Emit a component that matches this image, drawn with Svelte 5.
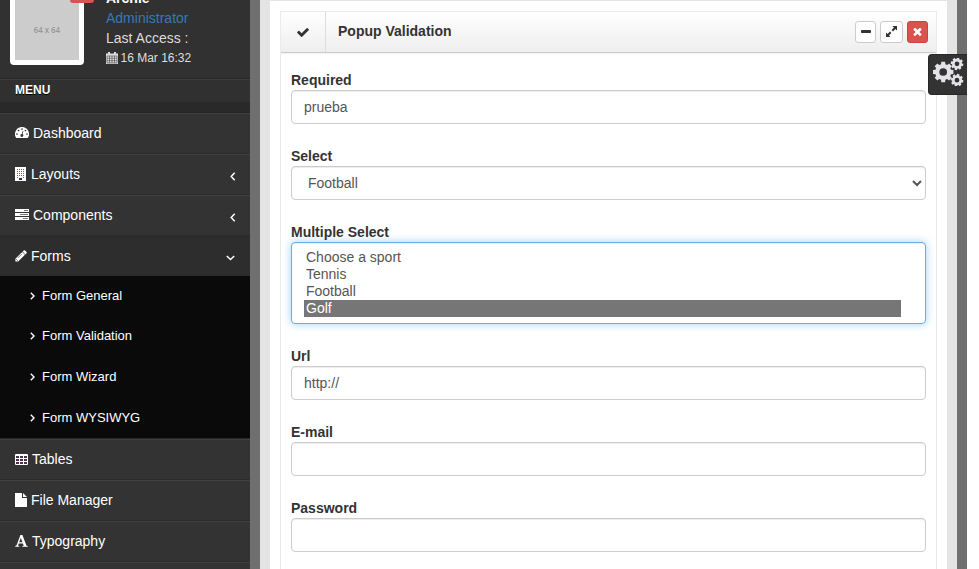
<script>
  const subItems = ['Form General', 'Form Validation', 'Form Wizard', 'Form WYSIWYG'];
  const sports = ['Choose a sport', 'Tennis', 'Football', 'Golf'];

  // Outline of a cog with eight teeth and a round hole.
  function gear(cx, cy, r, turn = 0) {
    const points = [];
    for (let i = 0; i < 8; i++) {
      const a = turn + (i * Math.PI) / 4;
      for (const [offset, k] of [[-0.27, 0.78], [-0.19, 1], [0.19, 1], [0.27, 0.78]]) {
        points.push(`${(cx + Math.cos(a + offset) * r * k).toFixed(2)} ${(cy + Math.sin(a + offset) * r * k).toFixed(2)}`);
      }
    }
    const h = r * 0.37;
    return `M${points.join('L')}Z M${cx - h} ${cy}a${h} ${h} 0 1 0 ${2 * h} 0a${h} ${h} 0 1 0 ${-2 * h} 0Z`;
  }
  const cogs = [gear(10.2, 14, 10.4), gear(24, 5.8, 6.4, 0.2), gear(24, 22.2, 6.4, 0.2)].join(' ');
</script>

{#snippet icon(name)}
  {#if name === 'dashboard'}
    <svg width="14" height="12" viewBox="0 0 14 12"><path fill="#fff" d="M7 0a7 7 0 0 0-5.9 10.8q.2.3.6.3h10.6q.4 0 .6-.3A7 7 0 0 0 7 0z"/><g fill="#333"><circle cx="7" cy="2" r=".85"/><circle cx="3.5" cy="3.5" r=".85"/><circle cx="10.5" cy="3.5" r=".85"/><circle cx="2" cy="7" r=".85"/><circle cx="12" cy="7" r=".85"/><path d="M7.7 3.8l.7.2-.8 3.1a1.45 1.45 0 1 1-.8-.2z"/></g></svg>
  {:else if name === 'building'}
    <svg width="12" height="14" viewBox="0 0 12 14"><path fill="#fff" d="M0 0h11v14H0z"/><g fill="#75597f">{#each [2, 4, 6, 8] as y}{#each [2, 4, 6, 8] as x}<path d="M{x} {y}h1v1h-1z"/>{/each}{/each}<path d="M2 10h1v1H2zM8 10h1v1H8z"/><path fill="#333" d="M4 11h3v2H4z"/></g></svg>
  {:else if name === 'tasks'}
    <svg width="14" height="12" viewBox="0 0 14 12"><path fill="#fff" d="M0 0h14v3H0zM0 4h14v3H0zM0 8h14v3H0z"/><path stroke="#555" stroke-width=".8" d="M9 1.5h4M5 5.5h8M8 9.5h5"/></svg>
  {:else if name === 'pencil'}
    <svg width="12" height="12" viewBox="0 0 12 12"><path fill="#fff" d="M8.7.5q.7-.7 1.4 0l1.4 1.4q.7.7 0 1.4l-1.1 1.1-2.8-2.8zM7.2 2l2.8 2.8L3.2 11.6H.4V8.8z"/><path stroke="#333" stroke-width=".6" fill="none" d="M1.2 9.2l1.6 1.6M3 7.8l3.7-3.7"/></svg>
  {:else if name === 'table'}
    <svg width="13" height="11" viewBox="0 0 13 11"><rect width="13" height="11" rx="1" fill="#fff"/><path fill="#4a304d" d="M1 2h3v2H1zM5 2h3v2H5zM9 2h3v2H9zM1 5h3v2H1zM5 5h3v2H5zM9 5h3v2H9zM1 8h3v2H1zM5 8h3v2H5zM9 8h3v2H9z"/></svg>
  {:else if name === 'file'}
    <svg width="12" height="14" viewBox="0 0 12 14"><path fill="#fff" d="M0 0h7v5h5v9H0zM8 0l4 4H8z"/></svg>
  {:else if name === 'font'}
    <svg width="13" height="12" viewBox="0 0 13 12"><path fill="#fff" fill-rule="evenodd" d="M5.4 0h2l3.9 10.2q.2.6 1.5.8v.8H7.3V11l1.4-.3-.8-2.3H3.8L3 10.7l1.3.3v.8H.2V11q1.2-.2 1.5-.9zM5.8 3L4.2 7.3h3.3z"/></svg>
  {/if}
{/snippet}

{#snippet menuItem(name, label, arrow = '')}
  <a class="item" class:active={arrow === 'down'} href="#{label}">
    <span class="glyph">{@render icon(name)}</span><span>{label}</span>
    {#if arrow === 'left'}
      <svg class="arrow" width="6" height="9" viewBox="0 0 6 9"><path fill="none" stroke="#fff" stroke-width="1.5" d="M4.7.8L1.2 4.5l3.5 3.7"/></svg>
    {:else if arrow === 'down'}
      <svg class="arrow" width="10" height="6" viewBox="0 0 10 6"><path fill="none" stroke="#fff" stroke-width="1.5" d="M.8 1l3.7 3.5L8.2 1"/></svg>
    {/if}
  </a>
{/snippet}

{#snippet textField(label, value)}
  <label class="field"><span>{label}</span><input class="control" type="text" {value} /></label>
{/snippet}

<div class="page">
  <aside>
    <div class="user">
      <div class="avatar"><div><span>64 x 64</span></div></div>
      <div class="who">
        <b>Archie</b>
        <a href="#admin">Administrator</a>
        <span>Last Access :</span>
        <small>
          <svg width="12" height="12" viewBox="0 0 12 12"><path fill="#ddd" d="M0 1.5h12V12H0zM2 0h2v3H2zM8 0h2v3H8z"/><path stroke="#444" stroke-width=".6" d="M1 4h10M1 6.3h10M1 8.7h10M1 11h10M1 4v7M3.5 4v7M6 4v7M8.5 4v7M11 4v7"/></svg>
          16 Mar 16:32
        </small>
      </div>
      <i class="status"></i>
    </div>
    <div class="menu-title">MENU</div>
    <div class="divider"></div>
    <nav>
      {@render menuItem('dashboard', 'Dashboard')}
      {@render menuItem('building', 'Layouts', 'left')}
      {@render menuItem('tasks', 'Components', 'left')}
      {@render menuItem('pencil', 'Forms', 'down')}
      <div class="sub">
        {#each subItems as label}
          <a href="#{label}"><svg width="5" height="8" viewBox="0 0 5 8"><path fill="none" stroke="#fff" stroke-width="1.4" d="M.8.8L4 4 .8 7.2"/></svg>{label}</a>
        {/each}
      </div>
      {@render menuItem('table', 'Tables')}
      {@render menuItem('file', 'File Manager')}
      {@render menuItem('font', 'Typography')}
      <div class="item"></div>
    </nav>
  </aside>

  <main>
    <div class="inner">
      <section class="box">
        <header>
          <div class="lead"><svg width="12" height="9" viewBox="120 334 1551 1188"><path fill="#333" d="M1671 566q0 40-28 68l-724 724-136 136q-28 28-68 28t-68-28l-136-136-362-362q-28-28-28-68t28-68l136-136q28-28 68-28t68 28l294 295 656-657q28-28 68-28t68 28l136 136q28 28 28 68z"/></svg></div>
          <h5>Popup Validation</h5>
          <div class="tools">
            <button aria-label="Collapse" style:width="21px"><svg width="10" height="3"><rect width="10" height="3" rx=".7" fill="#333"/></svg></button>
            <button aria-label="Expand" style:width="23px"><svg width="11" height="11" viewBox="0 0 11 11"><path fill="#333" d="M6.4 0H11v4.6L9.4 3 7 5.4 5.6 4 8 1.6zM4.6 11H0V6.4L1.6 8 4 5.6 5.4 7 3 9.4z"/></svg></button>
            <button class="danger" aria-label="Close" style:width="21px"><svg width="9" height="9" viewBox="302 238 1188 1316"><path fill="#fff" d="M1490 1322q0 40-28 68l-136 136q-28 28-68 28t-68-28l-294-294-294 294q-28 28-68 28t-68-28l-136-136q-28-28-28-68t28-68l294-294-294-294q-28-28-28-68t28-68l136-136q28-28 68-28t68 28l294 294 294-294q28-28 68-28t68 28l136 136q28 28 28 68t-28 68l-294 294 294 294q28 28 28 68z"/></svg></button>
          </div>
        </header>
        <form>
          {@render textField('Required', 'prueba')}
          <label class="field"><span>Select</span><select class="control"><option>Football</option></select></label>
          <div class="field">
            <span>Multiple Select</span>
            <div class="control list" role="listbox">
              {#each sports as sport}
                <div role="option" aria-selected={sport === 'Golf'}>{sport}</div>
              {/each}
            </div>
          </div>
          {@render textField('Url', 'http://')}
          {@render textField('E-mail', '')}
          {@render textField('Password', '')}
        </form>
      </section>
    </div>
  </main>
  <button class="settings" aria-label="Settings"><svg width="32" height="28" viewBox="0 0 32 28"><path fill="#e2e2e8" fill-rule="evenodd" d={cogs}/></svg></button>
</div>

<style>
  :global(body) { background: #fff; overflow: hidden; }
  * { box-sizing: border-box; }
  svg { display: block; flex: none; }
  a { text-decoration: none; }
  .page { position: relative; display: flex; width: 967px; height: 569px; overflow: hidden; background: #6f6f6f; font: 14px/20px "Liberation Sans", Arial, sans-serif; color: #333; }
  aside { width: 250px; background: #333; flex: none; color: #fff; }
  .user { position: relative; display: flex; height: 79px; padding-left: 10px; background: #313131; border-bottom: 1px solid #282828; overflow: hidden; }
  .avatar { width: 74px; height: 80px; margin-top: -15px; padding: 5px; background: #fff; border-radius: 4px; flex: none; }
  .avatar div { display: flex; align-items: center; justify-content: center; height: 70px; padding-top: 10px; background: #ccc; color: #969696; font: 600 9.5px/10px "Open Sans", sans-serif; }
  .avatar span { transform: scaleX(.82); white-space: nowrap; }
  .status { position: absolute; left: 70px; top: -10px; width: 24px; height: 13px; border-radius: 3px; background: #d9534f; }
  .who { display: flex; flex-direction: column; margin: -12px 0 0 22px; color: #ddd; }
  .who b { color: #fff; }
  .who a { color: #337ab7; }
  .who small { display: flex; gap: 2.5px; align-items: center; font-size: 12px; }
  .menu-title { height: 23px; padding-left: 15px; border-top: 1px solid #3c3c3c; background: #303030; font-size: 12px; font-weight: bold; line-height: 21px; text-shadow: 0 1px 0 #000; }
  .divider { height: 11px; background: #292929; border-bottom: 1px solid #252525; }
  .item { display: flex; align-items: center; height: 41px; padding: 0 14px 1px 15px; border-top: 1px solid #404040; border-bottom: 1px solid #2b2b2b; color: #fff; }
  .glyph { margin-right: 4px; }
  .arrow { margin: 5px 0 0 auto; }
  .active { height: 40px; background: #2d2d2d; border-color: #2a2a2a; }
  .sub { height: 163px; background: #0a0a0a; border-bottom: 1px solid #282828; }
  .sub a { display: flex; align-items: center; gap: 7px; height: 40.67px; padding: 0 0 1px 30px; color: #fff; font-size: 13px; }
  main { width: 697px; margin-left: 10px; padding: 1px 10px 0; background: #e4e4e4; }
  .inner { height: 568px; padding: 10px 10px 0; background: #fff; }
  .box { height: 600px; border: 1px solid #eaeaea; }
  header { display: flex; height: 41px; border-bottom: 1px solid #ccc; background: linear-gradient(#fff, #eee); box-shadow: 0 1px 1px #f3f3f3; }
  .lead { display: flex; align-items: center; justify-content: center; width: 45px; border-right: 1px solid #ddd; }
  h5 { margin: 0 0 0 12px; font-size: 14px; line-height: 38px; }
  .tools { display: flex; gap: 4px; margin: 9px 8px 0 auto; }
  .tools button { display: flex; align-items: center; justify-content: center; height: 22px; padding: 0 0 1px; border: 1px solid #ccc; border-radius: 3px; background: #fff; }
  .tools .danger { border-color: #d43f3a; background: #d9534f; }
  form { display: flex; flex-direction: column; gap: 22px; padding: 17px 10px 0; }
  .field { display: block; }
  .field > span { display: block; font-weight: bold; }
  .control { display: block; width: 100%; height: 34px; padding: 6px 12px; border: 1px solid #ccc; border-radius: 4px; background: #fff; color: #555; font: inherit; box-shadow: inset 0 1px 1px rgba(0, 0, 0, .075); }
  .list { height: 82px; border-color: #66afe9; box-shadow: inset 0 1px 1px rgba(0, 0, 0, .075), 0 0 8px rgba(102, 175, 233, .6); }
  .list div { width: 597px; height: 17px; padding-left: 2px; line-height: 17px; }
  .list [aria-selected='true'] { background: #767676; color: #fff; }
  .settings { position: absolute; top: 54px; right: 0; display: flex; align-items: center; width: 39px; height: 41px; padding: 0 0 5px 4px; border: 1px solid #282828; border-right: 0; border-radius: 4px 0 0 4px; background: #333; }
</style>
